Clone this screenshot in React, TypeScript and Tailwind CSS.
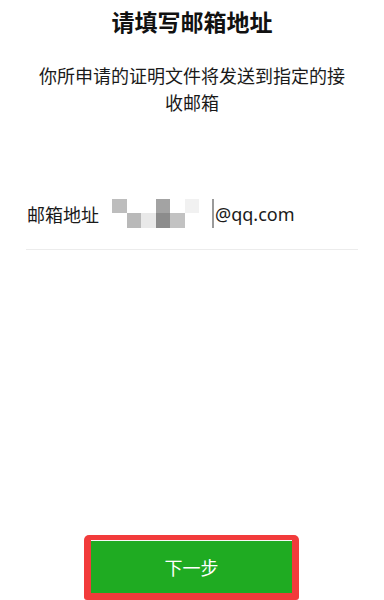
import React from "react";

export default function App() {
  const font = { fontFamily: '"Noto Sans CJK SC", "Noto Sans", sans-serif' };
  return (
    <div className="flex h-[600px] w-[384px] flex-col overflow-hidden bg-white text-[#111]" style={font}>
      <h1 className="mt-[5px] text-center text-[23px] font-bold leading-[32px]">请填写邮箱地址</h1>
      <p className="mx-auto mt-[25px] w-[312px] text-center text-[18px] leading-[27px] text-[#1a1a1a]">
        你所申请的证明文件将发送到指定的接收邮箱
      </p>
      <div className="mx-[26px] mt-[72px] flex h-[62px] items-center border-b border-[#ececec] pb-[10px]">
        <span className="ml-[1px] text-[18px] leading-[24px] text-[#1a1a1a]">邮箱地址</span>
        <div className="ml-[13px] grid grid-cols-[repeat(6,14.5px)] grid-rows-[14px_15px]">
          <div className="bg-[#bdbdbd]" />
          <div />
          <div />
          <div className="bg-[#a3a3a3]" />
          <div />
          <div className="bg-[#f1f1f1]" />
          <div />
          <div className="bg-[#b9b9b9]" />
          <div className="bg-[#e9e9e9]" />
          <div className="bg-[#8c8c8c]" />
          <div className="bg-[#c2c2c2]" />
          <div />
        </div>
        <div className="ml-[13px] h-[29px] w-[2px] bg-[#9a9a9a]" />
        <span className="ml-[1px] text-[18px] leading-[24px] text-[#1a1a1a]" style={{ fontFamily: '"Noto Sans", sans-serif' }}>
          @qq.com
        </span>
      </div>
      <div className="mt-auto ml-[84px] flex h-[65px] w-[215px] rounded-t-[5px] rounded-b-[3px] bg-[#f23b3b] px-[7px] pb-[7px] pt-[5px]">
        <div className="flex flex-1 items-center justify-center border-t-[1.5px] border-[#f7f7f7] bg-[#1fab22] text-[18px] text-white">
          下一步
        </div>
      </div>
    </div>
  );
}
